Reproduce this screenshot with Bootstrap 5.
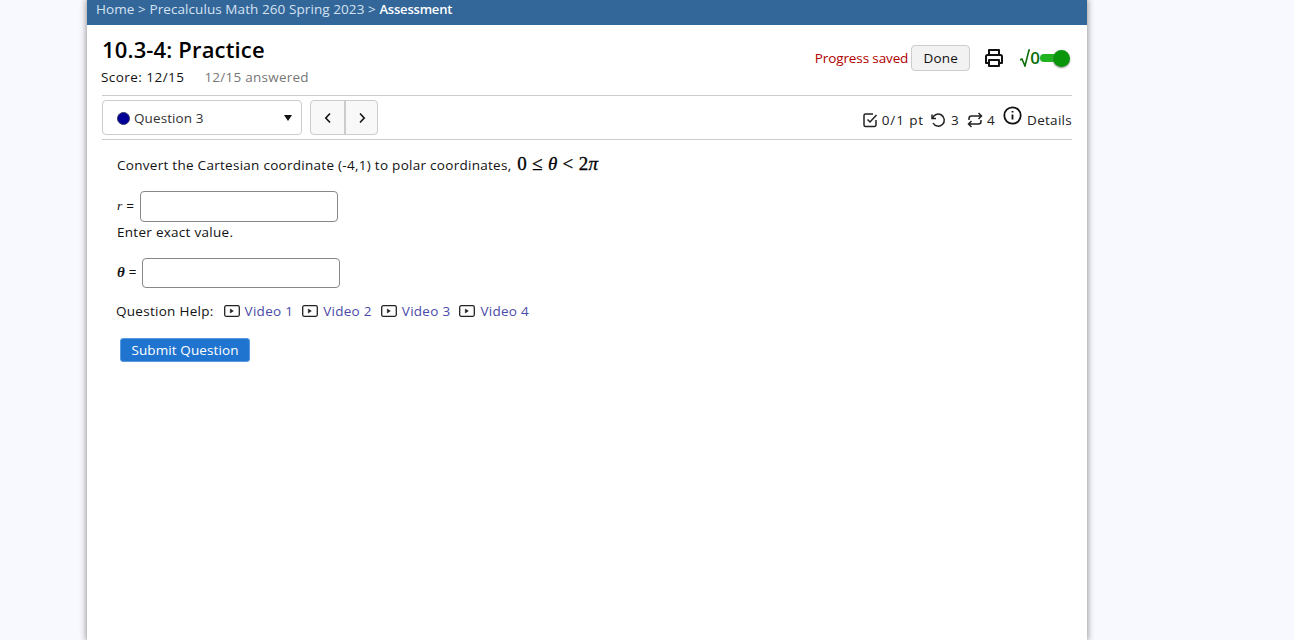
<!DOCTYPE html>
<html lang="en"><head><meta charset="utf-8"><title>Assessment</title>
<link href="https://cdn.jsdelivr.net/npm/bootstrap@5.3.0/dist/css/bootstrap.min.css" rel="stylesheet">
<style>
html,body{height:100%;overflow:hidden}
body{background:#f8f8ff;font-family:"Open Sans","Noto Sans",sans-serif;font-size:13.5px;color:#111;letter-spacing:.28px}
.sheet{width:1000px;height:640px;margin-left:87px;background:#fff;box-shadow:0 0 6px 1px #999}
.crumbs{height:25px;background:#336699;color:#d5e3f3;padding:0 9px;line-height:19px;font-size:13.5px;letter-spacing:.08px}
.crumbs b{color:#fff;font-weight:600;font-size:13px;letter-spacing:-.2px}
.inner{padding:0 15px 0 15px}
.toprow{height:71px;border-bottom:1px solid #ccc}
.ttl{font-size:22px;font-weight:600;color:#000;line-height:30px;margin-top:9px;letter-spacing:.15px}
.scoreline{margin-top:3px;margin-left:-1px;line-height:20px;letter-spacing:.45px}
.answered{color:#777;margin-left:20px;letter-spacing:.25px}
.saved{color:#b00000;margin-right:3px;letter-spacing:-.12px}
.donebtn{width:59px;height:26px;padding:0;background:#f2f2f2;border:1px solid #ccc;border-radius:4px;font-size:13.5px;color:#111;letter-spacing:.25px}
.sw{width:30px;height:14px;position:relative;margin-right:2px}
.sw i{position:absolute;left:0;top:3px;width:26px;height:8px;border-radius:4px;background:#1fb31f}
.sw em{position:absolute;right:0;top:-1px;width:17px;height:17px;border-radius:50%;background:#0a960a;box-shadow:0 1px 2px #888}
.rootlbl{color:#0a6e0a;font-size:17px;font-weight:600;line-height:20px;letter-spacing:0;margin-left:16px}
.printic{margin-left:14px}
.qrow{height:44px;border-bottom:1px solid #ccc}
.qsel{width:200px;height:35px;border:1px solid #ccc;border-radius:4px;background:#fff;padding:1px 9px 0 14px;color:#333;letter-spacing:.1px}
.dot{width:13px;height:13px;border-radius:50%;background:#000099;border:1px solid #333366;margin-right:4px}
.caret{width:0;height:0;border-left:4px solid transparent;border-right:4px solid transparent;border-top:6px solid #111}
.pager{margin-left:8px;height:35px;border:1px solid #ccc;border-radius:4px;background:#f8f8f8}
.pager span{width:33px;height:100%}
.pager span+span{border-left:2px solid #ccc}
.meta{color:#222;height:100%;padding-top:5px}
.ptx{letter-spacing:.9px}
.gap-pt{margin-left:6px}
.gap-rep{margin-left:8px}
.gap-n{margin-left:5px}
.gap-four{margin-left:4px}
.infoic{margin-left:8px;margin-top:5px}
.qbody{padding:14px 0 0 15px}
.promptline{line-height:20px;height:20px;white-space:nowrap}
.mathx{font-family:"Liberation Serif",serif;font-size:19px;color:#000;letter-spacing:.3px;margin-left:2px;line-height:20px;-webkit-text-stroke:.3px #000}
.fieldrow{margin-top:17px;height:31px}
.fieldrow2{margin-top:15px}
.fieldbox{width:198px;height:31px;border:1px solid #888;border-radius:4px;background:#fff;margin-left:6px}
.fieldbox.tall{height:30px;margin-left:5px}
.lblx{font-family:"Liberation Serif",serif;font-style:italic;letter-spacing:0}
.lbltheta{font-size:15px;font-weight:700}
.hint{line-height:20px}
.helpline{margin-top:13px;margin-left:-1px;line-height:20px}
.vidlink{color:#4a4aa8;text-decoration:none;margin-left:5px}
.vid{margin-left:9px}
.vid1{margin-left:10px}
.subbtn{margin:17px 0 0 3px;width:130px;height:24px;padding:0;background:#1f74d0;border:1px solid #5a9ae0;border-radius:3px;color:#fff;font-weight:500;font-size:13.5px;letter-spacing:.1px}
</style></head><body>
<div class="sheet">
<div class="crumbs">Home &gt; Precalculus Math 260 Spring 2023 &gt; <b>Assessment</b></div>
<div class="inner">
<div class="toprow d-flex justify-content-between">
 <div>
  <div class="ttl">10.3-4: Practice</div>
  <div class="scoreline"><span>Score: 12/15</span><span class="answered">12/15 answered</span></div>
 </div>
 <div class="d-flex align-items-center align-self-start" style="margin-top:20px">
  <span class="saved">Progress saved</span>
  <button class="donebtn" type="button">Done</button>
  <svg class="printic" width="20" height="20" viewBox="0 0 20 20" fill="none" stroke="#111" stroke-width="2" stroke-linejoin="round"><path d="M5 7V2h10v5M5 15H2V8.500a1.500 1.500 0 0 1 1.500-1.500h13A1.500 1.500 0 0 1 18 8.500V15h-3"/><rect x="5" y="12" width="10" height="6"/></svg>
  <span class="rootlbl d-flex align-items-center"><svg width="10" height="18" viewBox="0 0 10 18" fill="none" stroke="#0a6e0a" stroke-width="1.600"><path d="M0 11l2-1 3 7L9 1h1"/></svg>0</span>
  <span class="sw"><i></i><em></em></span>
 </div>
</div>
<div class="qrow d-flex justify-content-between align-items-center">
 <div class="d-flex align-items-center">
  <div class="qsel d-flex align-items-center"><span class="dot"></span><span>Question 3</span><span class="caret ms-auto"></span></div>
  <div class="pager d-flex">
   <span class="d-flex align-items-center justify-content-center"><svg width="8" height="12" viewBox="0 0 8 12" fill="none" stroke="#111" stroke-width="1.600"><path d="M6 1.500L1.800 6 6 10.500"/></svg></span>
   <span class="d-flex align-items-center justify-content-center"><svg width="8" height="12" viewBox="0 0 8 12" fill="none" stroke="#111" stroke-width="1.600"><path d="M2 1.500L6.200 6 2 10.500"/></svg></span>
  </div>
 </div>
 <div class="meta d-flex align-items-center">
  <svg width="16" height="16" viewBox="0 0 16 16" fill="none" stroke="#222" stroke-width="1.500"><path d="M14 8v5a1.500 1.500 0 0 1-1.500 1.500h-9A1.500 1.500 0 0 1 2 13V3.500A1.500 1.500 0 0 1 3.500 2H11"/><path d="M5.500 7.500L8 10l6.500-7"/></svg>
  <span class="ms-1 ptx">0/1 pt</span>
  <svg class="gap-pt" width="16" height="16" viewBox="0 0 16 16" fill="none" stroke="#222" stroke-width="1.500"><path d="M2 2.500v4h4"/><path d="M2.500 6.500A6 6 0 1 1 3 11"/></svg>
  <span class="gap-n">3</span>
  <svg class="gap-rep" width="16" height="16" viewBox="0 0 16 16" fill="none" stroke="#222" stroke-width="1.500"><path d="M11.500 1l3 3-3 3M14 4H4.500A2.500 2.500 0 0 0 2 6.500V8M4.500 15l-3-3 3-3M2 12h9.500A2.500 2.500 0 0 0 14 9.500V8"/></svg>
  <span class="gap-four">4</span>
  <svg class="align-self-start infoic" width="19" height="19" viewBox="0 0 19 19" fill="none" stroke="#111" stroke-width="1.800"><circle cx="9.500" cy="9.500" r="8.200"/><path d="M9.500 8.500v5M9.500 5v1.600"/></svg>
  <span class="gap-n">Details</span>
 </div>
</div>
<div class="qbody">
 <div class="promptline">Convert the Cartesian coordinate (-4,1) to polar coordinates, <span class="mathx">0 ≤ <i>θ</i> &lt; 2<i>π</i></span></div>
 <div class="fieldrow d-flex align-items-center"><span class="lblx">r</span><span class="ms-1">=</span><span class="fieldbox"></span></div>
 <div class="hint">Enter exact value.</div>
 <div class="fieldrow fieldrow2 d-flex align-items-center"><span class="lblx lbltheta">θ</span><span class="ms-1">=</span><span class="fieldbox tall"></span></div>
 <div class="helpline d-flex align-items-center">
  <span>Question Help:</span>
  <span class="vid vid1 d-flex align-items-center"><svg width="16" height="12" viewBox="0 0 16 12" fill="none" stroke="#222" stroke-width="1.300"><rect x=".7" y=".7" width="14.600" height="10.600" rx="1.500"/><path d="M6.300 4v4l3-2z" fill="#222" stroke-width=".6"/></svg><a class="vidlink" href="#">Video 1</a></span>
  <span class="vid d-flex align-items-center"><svg width="16" height="12" viewBox="0 0 16 12" fill="none" stroke="#222" stroke-width="1.300"><rect x=".7" y=".7" width="14.600" height="10.600" rx="1.500"/><path d="M6.300 4v4l3-2z" fill="#222" stroke-width=".6"/></svg><a class="vidlink" href="#">Video 2</a></span>
  <span class="vid d-flex align-items-center"><svg width="16" height="12" viewBox="0 0 16 12" fill="none" stroke="#222" stroke-width="1.300"><rect x=".7" y=".7" width="14.600" height="10.600" rx="1.500"/><path d="M6.300 4v4l3-2z" fill="#222" stroke-width=".6"/></svg><a class="vidlink" href="#">Video 3</a></span>
  <span class="vid d-flex align-items-center"><svg width="16" height="12" viewBox="0 0 16 12" fill="none" stroke="#222" stroke-width="1.300"><rect x=".7" y=".7" width="14.600" height="10.600" rx="1.500"/><path d="M6.300 4v4l3-2z" fill="#222" stroke-width=".6"/></svg><a class="vidlink" href="#">Video 4</a></span>
 </div>
 <button class="subbtn" type="button">Submit Question</button>
</div>
</div>
</div>
<script src="https://cdn.jsdelivr.net/npm/bootstrap@5.3.0/dist/js/bootstrap.bundle.min.js"></script>
</body></html>
